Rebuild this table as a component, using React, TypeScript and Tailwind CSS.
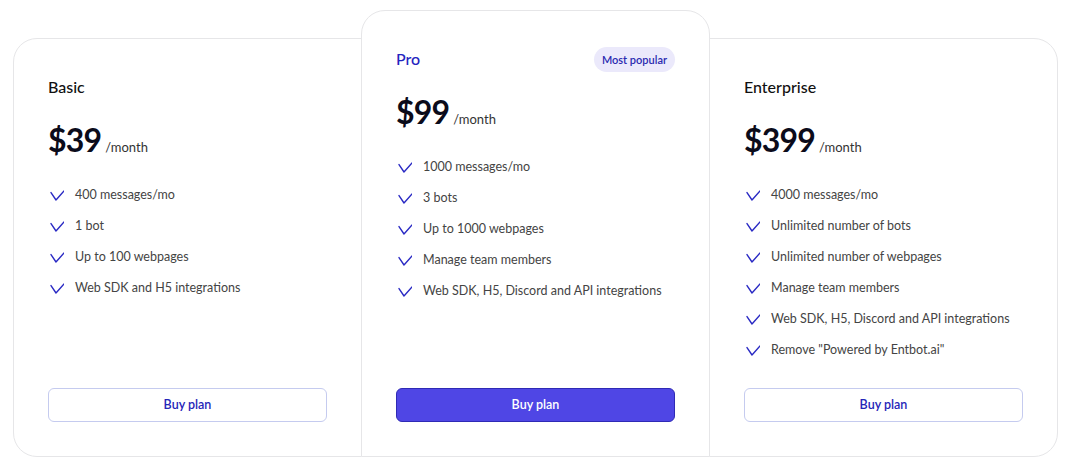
import React from "react";

type Tier = {
  name: string;
  price: string;
  features: string[];
  featured?: boolean;
};

const tiers: Tier[] = [
  {
    name: "Basic",
    price: "$39",
    features: ["400 messages/mo", "1 bot", "Up to 100 webpages", "Web SDK and H5 integrations"],
  },
  {
    name: "Pro",
    price: "$99",
    featured: true,
    features: [
      "1000 messages/mo",
      "3 bots",
      "Up to 1000 webpages",
      "Manage team members",
      "Web SDK, H5, Discord and API integrations",
    ],
  },
  {
    name: "Enterprise",
    price: "$399",
    features: [
      "4000 messages/mo",
      "Unlimited number of bots",
      "Unlimited number of webpages",
      "Manage team members",
      "Web SDK, H5, Discord and API integrations",
      'Remove "Powered by Entbot.ai"',
    ],
  },
];

function Tick() {
  return (
    <svg viewBox="0 0 16 16" className="h-4 w-4 shrink-0 text-[#2a2ac4]" fill="none">
      <path d="M3 5.6 8 13 16 4" stroke="currentColor" strokeWidth="1.4" strokeLinecap="round" strokeLinejoin="round" />
    </svg>
  );
}

export default function App() {
  return (
    <div
      className="flex w-[1070px] items-stretch bg-white pl-[13px] pt-[38px]"
      style={{ fontFamily: 'Lato, "Noto Sans", sans-serif' }}
    >
      {tiers.map((tier, i) => (
        <div
          key={tier.name}
          className={
            "flex w-[349px] flex-col justify-between border border-[#e6e6e8] bg-white p-[34px] " +
            (i === 0
              ? "rounded-l-[24px]"
              : i === 1
                ? "-mt-[28px] -ml-px rounded-t-[24px] relative z-10"
                : "-ml-px rounded-r-[24px]")
          }
        >
          <div>
            <div className="flex h-7 items-center justify-between">
              <h3
                className={
                  "text-[16px] font-medium leading-7 " +
                  (tier.featured ? "text-[#2424c0]" : "text-[#111111]")
                }
              >
                {tier.name}
              </h3>
              {tier.featured ? (
                <span className="rounded-full bg-[#ebe9fb] px-2 py-[3px] text-[11px] font-semibold leading-[19px] text-[#2a2ab0]">
                  Most popular
                </span>
              ) : null}
            </div>
            <p className="mt-[19px] flex items-baseline gap-x-[4px]">
              <span className="text-[32px] font-bold leading-10 tracking-tight text-[#0b0b1a]">{tier.price}</span>
              <span className="text-[13px] text-[#333333]">/month</span>
            </p>
            <ul className="mt-[25px] flex flex-col gap-[11px] text-[12.5px] leading-5 text-[#444444]">
              {tier.features.map((f) => (
                <li key={f} className="flex items-center gap-[11px] whitespace-nowrap">
                  <Tick />
                  {f}
                </li>
              ))}
            </ul>
          </div>
          <button
            type="button"
            className={
              "mt-7 h-[34px] w-full rounded-[6px] border text-[12.5px] font-semibold " +
              (tier.featured
                ? "border-[#2f2ab5] bg-[#4f46e5] text-white"
                : "border-[#c5cbef] bg-white text-[#2525b8]")
            }
          >
            Buy plan
          </button>
        </div>
      ))}
    </div>
  );
}
